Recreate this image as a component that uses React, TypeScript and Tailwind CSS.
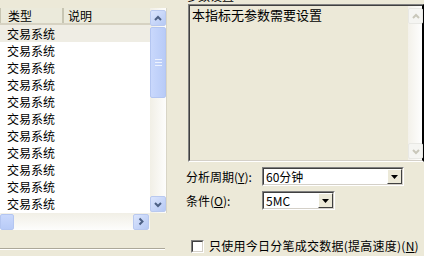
import React from "react";

const rows = Array(11).fill("交易系统");

function Chevron({ dir, color = "#4d6185" }: { dir: "up" | "down" | "right"; color?: string }) {
  const d =
    dir === "up" ? "M2 6 L5 3 L8 6" : dir === "down" ? "M2 3 L5 6 L8 3" : "M3.5 1.5 L6.5 4.5 L3.5 7.5";
  return (
    <svg width="10" height="9" viewBox="0 0 10 9">
      <path d={d} fill="none" stroke={color} strokeWidth="2" />
    </svg>
  );
}

function XpButton({ dir, className = "" }: { dir: "up" | "down" | "right"; className?: string }) {
  return (
    <div
      className={`w-[16px] h-[16px] rounded-[2px] border border-[#b9c9ef] bg-gradient-to-br from-[#dbe5fd] to-[#b6c9f4] flex items-center justify-center ${className}`}
    >
      <Chevron dir={dir} />
    </div>
  );
}

function DisabledButton({ dir }: { dir: "up" | "down" }) {
  return (
    <div className="w-[15px] h-[16px] rounded-[2px] border border-[#e8e8e4] bg-[#f5f5f2] flex items-center justify-center">
      <Chevron dir={dir} color="#c9c7ba" />
    </div>
  );
}

function Combo({ value, width }: { value: string; width: string }) {
  return (
    <div className={`${width} h-[19px] border border-t-[#808080] border-l-[#808080] border-b-white border-r-white`}>
      <div className="h-full flex items-center border border-t-[#404040] border-l-[#404040] border-b-[#d4d0c8] border-r-[#d4d0c8] bg-white">
        <span className="flex-1 pl-[2px] leading-none">{value}</span>
        <div className="w-[15px] h-[15px] bg-[#ece9d8] border border-t-white border-l-white border-b-[#404040] border-r-[#404040] flex items-center justify-center">
          <svg width="7" height="4" viewBox="0 0 7 4">
            <path d="M0 0 H7 L3.5 4 Z" fill="#000" />
          </svg>
        </div>
      </div>
    </div>
  );
}

export default function App() {
  return (
    <div
      className="w-[424px] h-[256px] bg-[#ece9d8] flex overflow-hidden text-[12px] text-black"
      style={{ fontFamily: '"Noto Sans CJK SC", "Liberation Sans", sans-serif' }}
    >
      {/* left list */}
      <div className="w-[167px] shrink-0 flex flex-col pt-[8px]">
        <div className="flex h-[205px] bg-white">
          <div className="w-[150px] flex flex-col">
            <div className="h-[17px] flex bg-[#ebeadb] border-b-2 border-[#d6d2c2] leading-[15px]">
              <div className="w-[62px] pl-[7px] border-l border-[#c7c5b2]">类型</div>
              <div className="flex-1 pl-[4px] border-l-2 border-l-[#c7c5b2]">说明</div>
            </div>
            {rows.map((r, i) => (
              <div
                key={i}
                className={`h-[17px] pl-[7px] leading-[17px] ${i === 0 ? "bg-[#efede4]" : "bg-white"}`}
              >
                {r}
              </div>
            ))}
          </div>
          <div className="w-[16px] flex flex-col bg-gradient-to-r from-[#f1efe6] to-[#fdfdfc]">
            <XpButton dir="up" className="mt-[2px]" />
            <div className="mt-[1px] h-[71px] rounded-[2px] border border-[#b4c6f1] bg-gradient-to-r from-[#c9d8fc] to-[#b8cbf7] flex flex-col items-center justify-center gap-[2px]">
              <div className="w-[7px] h-px bg-[#eef3fe]" />
              <div className="w-[7px] h-px bg-[#eef3fe]" />
              <div className="w-[7px] h-px bg-[#eef3fe]" />
            </div>
            <div className="flex-1" />
            <XpButton dir="down" className="mb-[1px]" />
          </div>
          <div className="w-px bg-[#d8d5c6]" />
        </div>
        <div className="h-[17px] flex">
          <div className="w-[150px] flex items-center bg-gradient-to-b from-[#f1efe6] to-[#fdfdfc]">
            <div className="w-[14px] h-[16px] rounded-[2px] border border-[#b4c6f1] bg-gradient-to-b from-[#c9d8fc] to-[#b8cbf7]" />
            <div className="flex-1" />
            <XpButton dir="right" className="mr-[1px]" />
          </div>
        </div>
        <div className="mt-[18px] w-[165px] border-t border-[#aca899] border-b border-b-white" />
      </div>

      {/* right side */}
      <div className="flex-1 pl-[21px] flex flex-col">
        <div className="h-[4px] relative">
          <span className="absolute left-[-2px] top-[-10px] leading-none">参数设置</span>
        </div>
        <div className="h-[158px] border border-t-[#808080] border-l-[#808080] border-b-white flex">
          <div className="flex-1 flex border border-t-[#404040] border-l-[#404040] border-b-[#d4d0c8]">
            <div className="flex-1 pl-[2px] pt-[1px] leading-[15px] text-[13px]">本指标无参数需要设置</div>
            <div className="w-[14px] flex flex-col bg-gradient-to-r from-[#f3f1ea] to-[#fefefe] pt-[2px] pb-[1px]">
              <DisabledButton dir="up" />
              <div className="flex-1" />
              <DisabledButton dir="down" />
            </div>
          </div>
        </div>
        <div className="mt-[5px] flex items-center">
          <span className="w-[76px] -ml-[2px]">
            分析周期(<span className="underline">Y</span>):
          </span>
          <Combo value="60分钟" width="w-[142px]" />
        </div>
        <div className="mt-[5px] flex items-center">
          <span className="w-[76px] -ml-[2px]">
            条件(<span className="underline">O</span>):
          </span>
          <Combo value="5MC" width="w-[73px]" />
        </div>
        <div className="mt-[27px] flex items-center">
          <div className="ml-[3px] w-[13px] h-[13px] border border-t-[#808080] border-l-[#808080] border-b-white border-r-white">
            <div className="w-full h-full bg-white border border-t-[#404040] border-l-[#404040] border-b-[#d4d0c8] border-r-[#d4d0c8]" />
          </div>
          <span className="ml-[5px] whitespace-nowrap tracking-[0.25px]">
            只使用今日分笔成交数据(提高速度)(<span className="underline">N</span>)
          </span>
        </div>
      </div>
    </div>
  );
}
